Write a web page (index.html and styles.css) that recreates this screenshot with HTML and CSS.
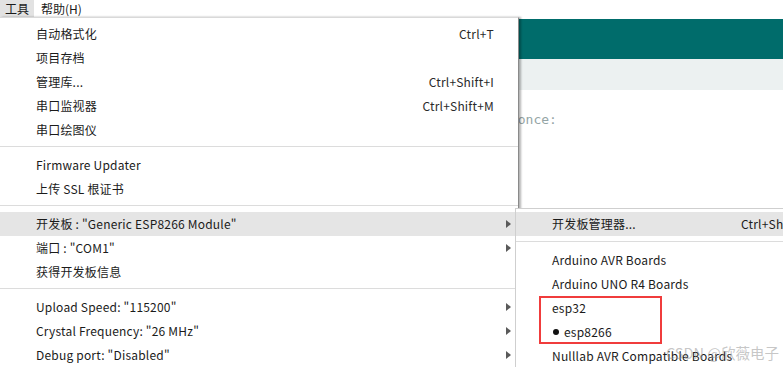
FILE: index.html
```html
<!DOCTYPE html>
<html lang="zh-CN">
<head>
<meta charset="utf-8">
<title>Arduino IDE - 工具菜单</title>
<link rel="stylesheet" href="styles.css">
</head>
<body>
<div class="app">
  <div class="menubar">
    <span class="mb-item active">工具</span>
    <span class="mb-item">帮助(H)</span>
  </div>
  <div class="editor">
    <div class="header"></div>
    <div class="toolbar"></div>
    <div class="code">
      <div class="code-line">// put your setup code here, to run once:</div>
    </div>
  </div>

  <div class="menu main-menu">
    <div class="row"><span class="label">自动格式化</span><span class="key">Ctrl+T</span><span class="slot"></span></div>
    <div class="row"><span class="label">项目存档</span><span class="key"></span><span class="slot"></span></div>
    <div class="row"><span class="label">管理库...</span><span class="key">Ctrl+Shift+I</span><span class="slot"></span></div>
    <div class="row"><span class="label">串口监视器</span><span class="key">Ctrl+Shift+M</span><span class="slot"></span></div>
    <div class="row"><span class="label">串口绘图仪</span><span class="key"></span><span class="slot"></span></div>
    <div class="sep"></div>
    <div class="row"><span class="label">Firmware Updater</span><span class="key"></span><span class="slot"></span></div>
    <div class="row"><span class="label">上传 SSL 根证书</span><span class="key"></span><span class="slot"></span></div>
    <div class="sep"></div>
    <div class="row hl"><span class="label">开发板 : "Generic ESP8266 Module"</span><span class="key"></span><span class="slot"><i class="arrow"></i></span></div>
    <div class="row"><span class="label">端口 : "COM1"</span><span class="key"></span><span class="slot"><i class="arrow"></i></span></div>
    <div class="row"><span class="label">获得开发板信息</span><span class="key"></span><span class="slot"></span></div>
    <div class="sep"></div>
    <div class="row"><span class="label">Upload Speed: "115200"</span><span class="key"></span><span class="slot"><i class="arrow"></i></span></div>
    <div class="row"><span class="label">Crystal Frequency: "26 MHz"</span><span class="key"></span><span class="slot"><i class="arrow"></i></span></div>
    <div class="row"><span class="label">Debug port: "Disabled"</span><span class="key"></span><span class="slot"><i class="arrow"></i></span></div>
  </div>

  <div class="menu sub-menu">
    <div class="srow hl"><span class="slabel">开发板管理器...</span><span class="skey">Ctrl+Shift+B</span></div>
    <div class="ssep"></div>
    <div class="srow"><span class="slabel">Arduino AVR Boards</span></div>
    <div class="srow"><span class="slabel">Arduino UNO R4 Boards</span></div>
    <div class="mark">
      <div class="mrow">esp32</div>
      <div class="mrow"><i class="dot"></i>esp8266</div>
    </div>
    <div class="srow"><span class="slabel">Nulllab AVR Compatible Boards</span></div>
  </div>

  <div class="watermark">CSDN @欣薇电子</div>
</div>
</body>
</html>
```

FILE: styles.css
```css
* { box-sizing: border-box; }
html, body { margin: 0; padding: 0; }
body {
  width: 783px;
  height: 367px;
  overflow: hidden;
  background: #fff;
  font-family: "Noto Sans CJK SC", "Noto Sans", sans-serif;
  color: #1b1b1b;
}
.app { position: relative; width: 783px; height: 367px; overflow: hidden; }

.menubar {
  display: flex;
  height: 19px;
  font-size: 12px;
  align-items: flex-start;
}
.mb-item {
  height: 17px;
  line-height: 17px;
  padding: 0 5px;
  margin-right: 2px;
}
.mb-item.active { background: #e2e2e2; }

.editor { display: flex; flex-direction: column; }
.header { height: 40px; background: #006c6b; }
.toolbar { height: 31px; background: #ecf1f1; }
.code { padding: 22px 0 0 236px; }
.code-line {
  font-family: "DejaVu Sans Mono", "Liberation Mono", monospace;
  font-size: 13px;
  line-height: 16px;
  color: #95a5a6;
  white-space: nowrap;
}

.menu {
  position: absolute;
  background: #fff;
  font-size: 12px;
  letter-spacing: 0.2px;
}

.main-menu {
  left: 0;
  top: 17px;
  width: 519px;
  height: 360px;
  border-top: 1px solid #d9d9d9;
  border-right: 1px solid #8a8a8a;
  box-shadow: 2px 0 2px rgba(0, 0, 0, 0.3);
  padding-top: 4px;
}
.row {
  display: grid;
  grid-template-columns: 1fr auto 24px;
  height: 24px;
  line-height: 24px;
  padding-left: 36px;
  white-space: nowrap;
}
.row.hl { background: #e5e5e5; }
.key { color: #2a2a2a; }
.slot { position: relative; }
.arrow {
  position: absolute;
  left: 12px;
  top: 8px;
  width: 0;
  height: 0;
  border-top: 4px solid transparent;
  border-bottom: 4px solid transparent;
  border-left: 5px solid #5a5a5a;
}
.sep {
  height: 1px;
  background: #dcdcdc;
  margin: 4px 0 6px;
}

.sub-menu {
  left: 515px;
  top: 208px;
  width: 320px;
  height: 170px;
  border: 1px solid #cfcfcf;
  padding-top: 3px;
}
.srow {
  display: grid;
  grid-template-columns: 189px auto;
  height: 24px;
  line-height: 24px;
  padding-left: 36px;
  white-space: nowrap;
}
.srow.hl { background: #e5e5e5; }
.ssep {
  height: 1px;
  background: #dcdcdc;
  margin: 5px 0 6px;
}
.mark {
  margin-left: 23px;
  width: 123px;
  box-shadow: inset 0 0 0 2px #f03c3c;
}
.mrow {
  height: 24px;
  line-height: 24px;
  padding-left: 13px;
  white-space: nowrap;
  display: flex;
  align-items: center;
}
.dot {
  display: inline-block;
  width: 6px;
  height: 6px;
  border-radius: 50%;
  background: #111;
  margin: 0 5px 0 1px;
}

.watermark {
  position: absolute;
  left: 666px;
  top: 343px;
  font-size: 14.5px;
  line-height: 20px;
  color: rgba(150, 150, 150, 0.55);
  white-space: nowrap;
}
```
